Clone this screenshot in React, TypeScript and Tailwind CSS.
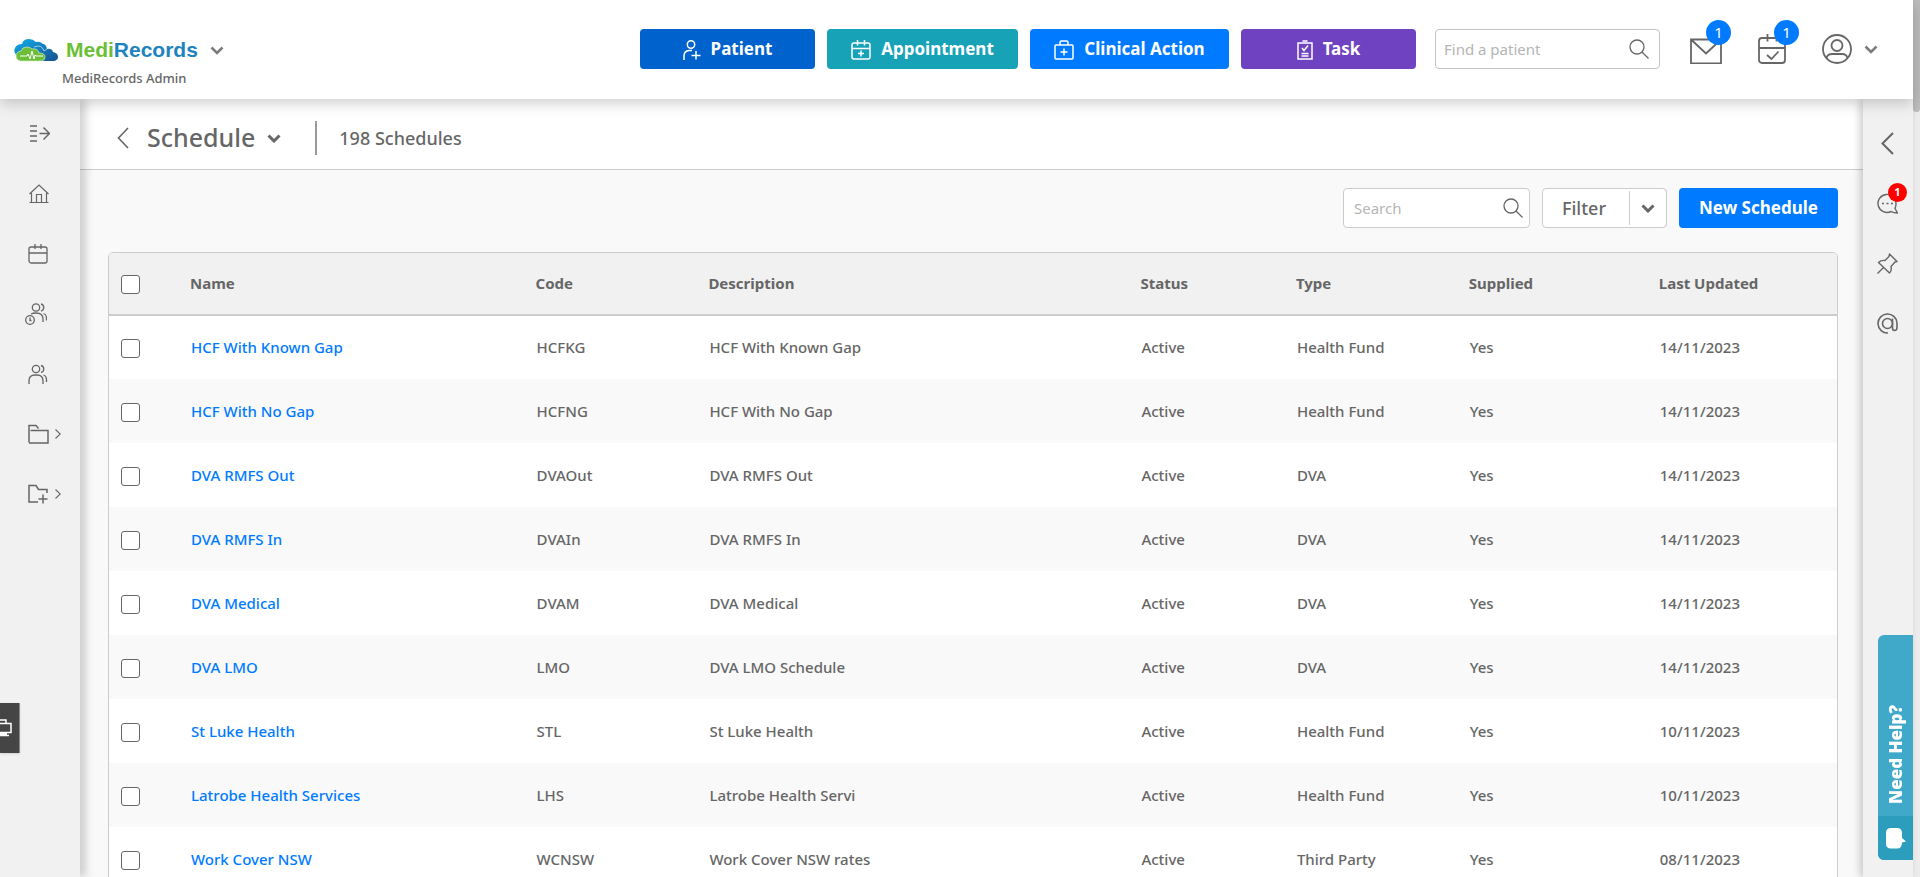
import React, { useState } from 'react';

interface Schedule {
  name: string;
  code: string;
  description: string;
  type: string;
  updated: string;
}

const schedules: Schedule[] = [
  { name: 'HCF With Known Gap', code: 'HCFKG', description: 'HCF With Known Gap', type: 'Health Fund', updated: '14/11/2023' },
  { name: 'HCF With No Gap', code: 'HCFNG', description: 'HCF With No Gap', type: 'Health Fund', updated: '14/11/2023' },
  { name: 'DVA RMFS Out', code: 'DVAOut', description: 'DVA RMFS Out', type: 'DVA', updated: '14/11/2023' },
  { name: 'DVA RMFS In', code: 'DVAIn', description: 'DVA RMFS In', type: 'DVA', updated: '14/11/2023' },
  { name: 'DVA Medical', code: 'DVAM', description: 'DVA Medical', type: 'DVA', updated: '14/11/2023' },
  { name: 'DVA LMO', code: 'LMO', description: 'DVA LMO Schedule', type: 'DVA', updated: '14/11/2023' },
  { name: 'St Luke Health', code: 'STL', description: 'St Luke Health', type: 'Health Fund', updated: '10/11/2023' },
  { name: 'Latrobe Health Services', code: 'LHS', description: 'Latrobe Health Servi', type: 'Health Fund', updated: '10/11/2023' },
  { name: 'Work Cover NSW', code: 'WCNSW', description: 'Work Cover NSW rates', type: 'Third Party', updated: '08/11/2023' },
];

interface IconProps {
  className: string;
  viewBox: string;
  stroke?: number;
  children: React.ReactNode;
}

const Icon: React.FC<IconProps> = ({ className, viewBox, stroke = 1.5, children }) => (
  <svg className={className} viewBox={viewBox} fill="none" stroke="currentColor" strokeWidth={stroke} aria-hidden="true">
    {children}
  </svg>
);

const ChevronDown = ({ className, stroke = 2.5 }: { className: string; stroke?: number }) => (
  <Icon className={className} viewBox="0 0 14 9" stroke={stroke}>
    <path d="M1.5 1.5 7 7l5.5-5.5" />
  </Icon>
);

const SearchIcon = () => (
  <Icon className="h-5 w-5 shrink-0" viewBox="0 0 20 20" stroke={1.3}>
    <circle cx="8" cy="8" r="7" />
    <path d="m13 13 6.5 6.5" />
  </Icon>
);

const Logo = () => (
  <svg className="h-6 w-11" viewBox="0 0 44 24" aria-hidden="true">
    <defs>
      <linearGradient id="cloud" x1="0" y1="0" x2="1" y2="1">
        <stop offset="0" stopColor="#12aeea" />
        <stop offset="1" stopColor="#17508f" />
      </linearGradient>
    </defs>
    <path
      d="M3 18Q-1 14 1 10q2-4 7-4 1-5 7-5 4 0 7 3 4-1 7 2 3 0 4 5 5-1 6 3 5 1 5 5 0 3-4 4H9z"
      fill="url(#cloud)"
    />
    <path d="M20 9q8-3 10 4l3-2" fill="none" stroke="#cfe8f7" strokeWidth=".7" />
    <path
      d="M6 23q-4-1-4-5t5-5q1-4 6-4 3 0 5 2 6-1 7 4 6 0 6 4 0 3-3 4z"
      fill="#6cbd38"
      stroke="#d6efc4"
      strokeWidth=".7"
    />
    <path d="M6 18h7l1-2 2 5 2-8 2 8 1-4 1 1h7" fill="none" stroke="#fff" strokeWidth="1" />
  </svg>
);

const actions = [
  {
    label: 'Patient',
    style: 'w-[175px] bg-[#0062cc]',
    icon: (
      <Icon className="mt-0.5 h-5 w-[18px]" viewBox="0 0 18 20">
        <circle cx="8" cy="4.5" r="3.7" />
        <path d="M1 20v-4q0-5 5-5.500h3M13 11v8.500M8.500 15.500h9" />
      </Icon>
    ),
  },
  {
    label: 'Appointment',
    style: 'w-[191px] bg-[#17a2b8]',
    icon: (
      <Icon className="mt-0.5 h-5 w-5" viewBox="0 0 20 20">
        <rect x="1" y="3" width="18" height="16" rx="2" />
        <path d="M1 8.500h18M6.500 0v5.500M13.500 0v5.500M10 10.500v6M7 13.500h6" />
      </Icon>
    ),
  },
  {
    label: 'Clinical Action',
    style: 'w-[199px] bg-[#007bff]',
    icon: (
      <Icon className="mt-0.5 h-5 w-5" viewBox="0 0 20 20">
        <rect x="1" y="5" width="18" height="14" rx="1" />
        <path d="M6 5V2.500Q6 1 7.500 1h5Q14 1 14 2.500V5M10 8.500v7M6.500 12h7" />
      </Icon>
    ),
  },
  {
    label: 'Task',
    style: 'w-[175px] bg-[#6f42c1]',
    icon: (
      <Icon className="mt-0.5 h-5 w-4" viewBox="0 0 16 20">
        <path d="M1 3h14v16H1zM5.500 1h5M5 8l2 2.500 4-5M4.500 13.500h7M4.500 16h7" />
      </Icon>
    ),
  },
];

const Header = () => (
  <header className="relative z-20 flex h-[99px] shrink-0 items-start bg-white pl-3.5 pr-[35px] shadow-[0_4px_14px_rgba(0,0,0,0.2)]">
    <div className="flex flex-1 flex-col items-start pt-[34px]">
      <button type="button" className="flex h-8 items-center">
        <Logo />
        <span className="ml-2 font-['Liberation_Sans'] text-[21px] font-bold text-[#6abf36]">
          Medi<span className="text-[#1e83be]">Records</span>
        </span>
        <ChevronDown className="ml-3 h-[9px] w-3.5 text-[#7b7b7b]" />
      </button>
      <span className="pl-12 text-[13px] font-medium leading-6">MediRecords Admin</span>
    </div>
    <nav className="flex gap-3 pt-[29px]">
      {actions.map(action => (
        <button
          key={action.label}
          type="button"
          className={`flex h-10 items-center justify-center gap-2.5 rounded text-[17px] font-bold text-white ${action.style}`}
        >
          {action.icon}
          {action.label}
        </button>
      ))}
    </nav>
    <label className="ml-[19px] mt-[29px] flex h-10 w-[225px] items-center rounded border border-[#c4c4c4] pl-2 pr-2.5">
      <input
        type="text"
        aria-label="Find a patient"
        placeholder="Find a patient"
        className="min-w-0 flex-1 text-[15px] outline-none placeholder:text-[#b5b5b5]"
      />
      <SearchIcon />
    </label>
    <div className="ml-[30px] flex items-center gap-9 pt-[34px]">
      <button type="button" aria-label="Messages" className="relative">
        <Icon className="h-[30px] w-8" viewBox="0 0 32 30" stroke={1.8}>
          <path d="M1 5.500h30v24H1zM1 5.500l15 14 15-14" />
        </Icon>
        <Badge />
      </button>
      <button type="button" aria-label="Appointments" className="relative">
        <Icon className="h-[30px] w-7" viewBox="0 0 28 30" stroke={1.8}>
          <rect x="1" y="4" width="26" height="25" rx="3" />
          <path d="M1 14h26M9.500 0v7.500M18.500 0v7.500M9 21l4.500 4 7-7.500" />
        </Icon>
        <Badge />
      </button>
      <button type="button" aria-label="Account" className="flex items-center gap-3">
        <Icon className="h-[30px] w-[30px]" viewBox="0 0 30 30" stroke={1.8}>
          <circle cx="15" cy="15" r="14" />
          <circle cx="15" cy="11.500" r="5.500" />
          <path d="M4.500 24q1-4 5.500-4h10q4.500 0 5.500 4" />
        </Icon>
        <ChevronDown className="h-[9px] w-3.5 text-[#7b7b7b]" />
      </button>
    </div>
  </header>
);

const Badge = () => (
  <span className="absolute -top-3.5 left-4 flex h-[25px] w-[25px] items-center justify-center rounded-full bg-[#007bff] text-[15px] text-white">
    1
  </span>
);

const Arrow = () => (
  <Icon className="h-2.5 w-1.5" viewBox="0 0 6 10" stroke={1.1}>
    <path d="m.5.500 4.800 4.500L.500 9.500" />
  </Icon>
);

const navItems = [
  {
    label: 'Expand menu',
    icon: (
      <Icon className="h-5 w-[22px]" viewBox="0 0 22 20">
        <path d="M2 2h7M2 7h7M2 12h7M2 17h7M11.500 9.500h10M15.500 3.500l6 6-6 6" />
      </Icon>
    ),
  },
  {
    label: 'Home',
    icon: (
      <Icon className="h-5 w-[22px]" viewBox="0 0 22 20" stroke={1.2}>
        <path d="M1.500 10 11 1l9.500 9M3.500 9v9.500M18.500 9v9.500M1.500 18.500h19M8.500 18.500v-8h5v8" />
      </Icon>
    ),
  },
  {
    label: 'Calendar',
    icon: (
      <Icon className="h-5 w-5" viewBox="0 0 20 20" stroke={1.3}>
        <rect x="1" y="3" width="18" height="16" rx="2" />
        <path d="M1 9h18M7 0v5M13 0v5" />
      </Icon>
    ),
  },
  {
    label: 'Waiting room',
    icon: (
      <Icon className="-ml-[3px] h-[22px] w-[22px]" viewBox="0 0 22 22" stroke={1.3}>
        <circle cx="11" cy="4.500" r="3.700" />
        <path d="M16 1a3.600 3.600 0 0 1 0 7M18.500 10.500q3 1 3 5v2M6 11q2-1 5-1 7 0 7 6v3" />
        <circle cx="5" cy="17" r="4.300" />
        <path d="M5 14.500v3h1.500" />
      </Icon>
    ),
  },
  {
    label: 'Patients',
    icon: (
      <Icon className="h-5 w-5" viewBox="0 0 20 20" stroke={1.3}>
        <circle cx="8" cy="5" r="3.700" />
        <path d="M13 1.500a3.600 3.600 0 0 1 0 7M15.500 11q3 1 3 5v2M1 20v-3q0-6 6-6h2q6 0 6 6v3" />
      </Icon>
    ),
  },
  {
    label: 'Files',
    expandable: true,
    icon: (
      <Icon className="h-5 w-[21px]" viewBox="0 0 21 20">
        <path d="M1 18.500V1.500h7l2.500 3M2.500 6.500H20v12.500H1" />
      </Icon>
    ),
  },
  {
    label: 'New folder',
    expandable: true,
    icon: (
      <Icon className="h-5 w-[21px]" viewBox="0 0 21 20">
        <path d="M10 18H1V1.500h7l2.500 4H19V9M15 10.500v9M10.500 15h9" />
      </Icon>
    ),
  },
];

const LeftNav = () => (
  <nav className="relative z-10 w-20 shrink-0 bg-[#f1f1f1] shadow-[6px_0_8px_rgba(0,0,0,0.17)]">
    <ul className="flex flex-col gap-10 pl-7 pt-[25px]">
      {navItems.map(item => (
        <li key={item.label}>
          <a href="#" aria-label={item.label} className="flex h-5 items-center gap-1.5">
            {item.icon}
            {item.expandable && <Arrow />}
          </a>
        </li>
      ))}
    </ul>
    <button
      type="button"
      aria-label="Workspace"
      className="absolute left-0 top-[604px] flex h-[50px] w-5 items-center border-r border-[#8a8a8a] bg-[#454545] text-white shadow"
    >
      <Icon className="h-5 w-3" viewBox="0 0 12 20">
        <path d="M0 2h6v3.500M0 5.500h11v9H0M0 17.500h9M0 16h7" />
      </Icon>
    </button>
  </nav>
);

const RightNav = () => (
  <aside className="relative z-10 flex w-[50px] shrink-0 flex-col items-center bg-[#f1f1f1] pr-px pt-[33px] shadow-[-3px_0_8px_rgba(0,0,0,0.2)]">
    <button type="button" aria-label="Open panel">
      <Icon className="h-[23px] w-[13px]" viewBox="0 0 13 23" stroke={2}>
        <path d="M12 1 1.500 11.500 12 22" />
      </Icon>
    </button>
    <button type="button" aria-label="Messages" className="relative mt-[38px]">
      <Icon className="h-[21px] w-[21px]" viewBox="0 0 21 21" stroke={1.4}>
        <path d="M14 18.500A9 9 0 1 1 19 11q0 2-1 4.500l2.500 4.500q-4 0-6.500-1.500z" />
        <path d="M5 10.500h2M9.500 10.500h2M14 10.500h2" />
      </Icon>
      <span className="absolute -top-2.5 left-[11px] flex h-[19px] w-[19px] items-center justify-center rounded-full bg-[#f00] text-[11px] font-bold text-white">
        1
      </span>
    </button>
    <button type="button" aria-label="Pinned" className="mt-[39px]">
      <Icon className="h-[21px] w-[21px]" viewBox="0 0 21 21" stroke={1.4}>
        <path
          d="M12.500 1 20 8.500l-2 .500-4 4.500q1 4-1.500 6.500L1.500 9.500Q4 7 8 7.500l4-4zM6.500 14.500.500 20.500"
          strokeLinejoin="round"
        />
      </Icon>
    </button>
    <button type="button" aria-label="Mentions" className="mt-[39px]">
      <Icon className="h-[21px] w-[21px]" viewBox="0 0 21 21" stroke={1.6}>
        <circle cx="10.500" cy="10.500" r="5" />
        <path d="M15.500 5.500v9.500q0 2.500 2 2.500 2.500 0 2.500-3v-4.500A9.500 9.500 0 1 0 11 20" />
      </Icon>
    </button>
  </aside>
);

const NeedHelp = () => (
  <button
    type="button"
    className="fixed bottom-[17px] right-[7px] z-30 flex h-[225px] w-[35px] flex-col overflow-hidden rounded-l-md bg-[#40a9c9] text-white"
  >
    <span className="flex flex-1 rotate-180 items-center self-center pt-3 font-['Open_Sans'] text-[17px] font-extrabold leading-5 [writing-mode:vertical-rl]">
      Need Help?
    </span>
    <span className="flex h-11 w-full items-center justify-center bg-[#2d9dbd]">
      <svg className="h-[21px] w-5" viewBox="0 0 20 21" fill="currentColor" aria-hidden="true">
        <path d="M5 0h6q5 0 5 5v5l4 3.500-4 1q0 6-5 6H5q-5 0-5-5V5q0-5 5-5z" />
      </svg>
    </span>
  </button>
);

const checkbox =
  'mt-0.5 block h-[19px] w-[19px] appearance-none rounded-[3px] border border-[#666] bg-white checked:bg-[#007bff]';

const ScheduleTable = () => {
  const [selected, setSelected] = useState<string[]>([]);

  const toggle = (name: string) => {
    setSelected(prev => (prev.includes(name) ? prev.filter(n => n !== name) : [...prev, name]));
  };

  const toggleAll = () => {
    setSelected(prev => (prev.length === schedules.length ? [] : schedules.map(s => s.name)));
  };

  return (
    <div className="overflow-hidden rounded-t-[5px] border border-[#ccc] bg-white">
      <table className="w-full table-fixed text-left text-[15px]">
        <thead>
          <tr className="h-[62px] border-b-2 border-[#ccc] bg-[#f1f1f1]">
            <th className="w-[71px] pl-3">
              <input
                type="checkbox"
                aria-label="Select all schedules"
                className={checkbox}
                checked={selected.length === schedules.length}
                onChange={toggleAll}
              />
            </th>
            <th className="w-[20%] pl-2.5">Name</th>
            <th className="w-[10%] pl-2.5">Code</th>
            <th className="w-[25%] pl-2.5">Description</th>
            <th className="w-[9%] pl-2.5">Status</th>
            <th className="w-[10%] pl-2.5">Type</th>
            <th className="w-[11%] pl-2.5">Supplied</th>
            <th className="pl-2.5">Last Updated</th>
          </tr>
        </thead>
        <tbody>
          {schedules.map(schedule => (
            <tr key={schedule.name} className="h-16 font-medium even:bg-[#f9f9f9]">
              <td className="pl-3">
                <input
                  type="checkbox"
                  aria-label={`Select ${schedule.name}`}
                  className={checkbox}
                  checked={selected.includes(schedule.name)}
                  onChange={() => toggle(schedule.name)}
                />
              </td>
              <td className="pl-[11px]">
                <a href="#" className="text-[#007bff]">{schedule.name}</a>
              </td>
              <td className="pl-[11px]">{schedule.code}</td>
              <td className="pl-[11px]">{schedule.description}</td>
              <td className="pl-[11px]">Active</td>
              <td className="pl-[11px]">{schedule.type}</td>
              <td className="pl-[11px]">Yes</td>
              <td className="pl-[11px]">{schedule.updated}</td>
            </tr>
          ))}
        </tbody>
      </table>
    </div>
  );
};

const App: React.FC = () => (
  <div className="flex h-screen overflow-hidden bg-[#f9f9f9] font-['Noto_Sans',sans-serif] text-[#666]">
    <div className="flex min-w-0 flex-1 flex-col">
      <Header />
      <div className="flex min-h-0 flex-1">
        <LeftNav />
        <main className="min-w-0 flex-1 overflow-hidden">
          <div className="flex h-[71px] items-center border-b border-[#ccc] bg-white pl-[37px] pt-2">
            <button type="button" aria-label="Back">
              <Icon className="h-[22px] w-3" viewBox="0 0 12 22" stroke={1.6}>
                <path d="M11 1 1.500 11 11 21" />
              </Icon>
            </button>
            <h1 className="ml-[18px] text-[25px] font-medium">Schedule</h1>
            <button type="button" aria-label="Switch view" className="ml-3">
              <ChevronDown className="h-[9px] w-3.5" stroke={3} />
            </button>
            <span className="ml-[34px] h-[34px] w-0.5 bg-[#999]" />
            <span className="ml-[22px] text-lg font-medium">198 Schedules</span>
          </div>
          <div className="flex justify-end gap-3 px-[25px] pb-6 pt-[18px]">
            <label className="flex h-10 w-[187px] items-center rounded border border-[#ccc] bg-white pl-2.5 pr-1.5">
              <input
                type="text"
                aria-label="Search"
                placeholder="Search"
                className="min-w-0 flex-1 text-[15px] outline-none placeholder:text-[#b5b5b5]"
              />
              <SearchIcon />
            </label>
            <div className="flex h-10 w-[125px] items-center rounded border border-[#ccc] bg-white">
              <button type="button" className="flex-1 pr-1 text-lg font-medium">Filter</button>
              <span className="h-[34px] w-px bg-[#ccc]" />
              <button type="button" aria-label="Filter options" className="flex w-9 justify-center">
                <ChevronDown className="h-[9px] w-3.5" stroke={3} />
              </button>
            </div>
            <button type="button" className="h-10 w-[159px] rounded bg-[#007bff] text-[17px] font-bold text-white">
              New Schedule
            </button>
          </div>
          <div className="pl-7 pr-[25px]">
            <ScheduleTable />
          </div>
        </main>
        <RightNav />
      </div>
    </div>
    <div className="w-[7px] shrink-0 bg-[#ececec]">
      <div className="h-28 rounded-b bg-[#bcbcbc]" />
    </div>
    <NeedHelp />
  </div>
);

export default App;
